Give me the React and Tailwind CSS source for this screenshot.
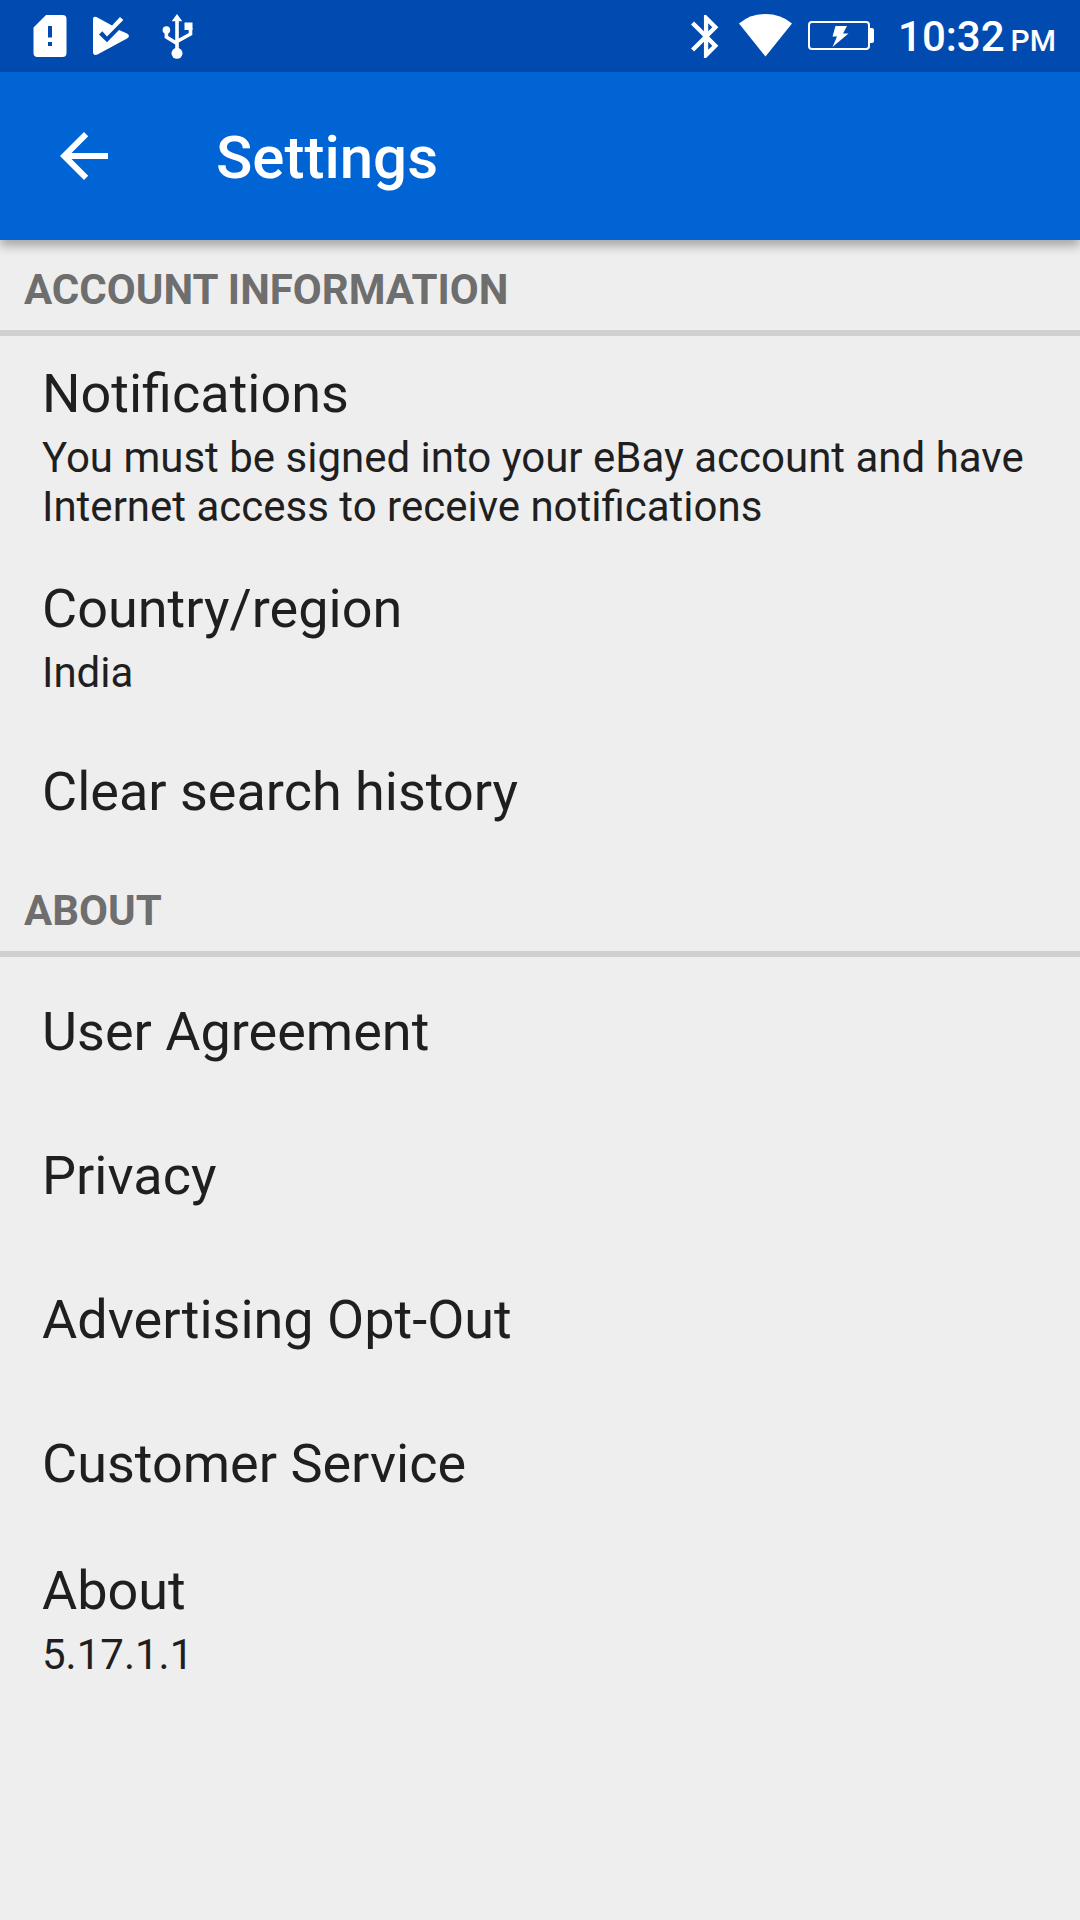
function SimAlertIcon() {
  return (
    <svg viewBox="33 14 34 44" className="h-11 w-[34px]" aria-hidden="true">
      <path
        fill="currentColor"
        fillRule="evenodd"
        d="M46 15H62.500Q66.500 15 66.500 19V53Q66.500 57 62.500 57H37.500Q33.500 57 33.500 53V27.500ZM48 26V37.500H52V26ZM48 42V46H52V42Z"
      />
    </svg>
  );
}

function PlayCheckIcon() {
  return (
    <svg viewBox="92 15 38 42" className="h-[42px] w-[38px]" aria-hidden="true">
      <path
        fill="currentColor"
        d="M93 19Q93 16 96.500 17L112 25.500L120 17L123.300 20L107 36.500L102.300 31.300L99 34.500L107 42.300L119 30L127 33.500Q131 36 127 38.500L97.500 54.500Q93 56 93 52Z"
      />
    </svg>
  );
}

function UsbIcon() {
  return (
    <svg viewBox="162 13 32 46" className="h-[46px] w-8" aria-hidden="true">
      <path
        fill="none"
        stroke="currentColor"
        strokeWidth="3.6"
        d="M177 20V52M166.400 31V37L177 43.500M190.500 28V34L177 41.500"
      />
      <path fill="currentColor" d="M177 14L182.300 21.300H171.700ZM184.500 22.500H192.500V30H184.500Z" />
      <circle cx="177" cy="53.300" r="5.500" fill="currentColor" />
      <circle cx="166.400" cy="30" r="3.800" fill="currentColor" />
    </svg>
  );
}

function BluetoothIcon() {
  return (
    <svg viewBox="5 2 13 20" className="h-[43px] w-7" aria-hidden="true">
      <path
        fill="currentColor"
        d="M17.710 7.710L12 2h-1v7.590L6.410 5 5 6.410 10.590 12 5 17.590 6.410 19 11 14.410V22h1l5.710-5.710-4.300-4.290 4.300-4.290zM13 5.830l1.880 1.880L13 9.590V5.830zm1.880 10.460L13 18.170v-3.760l1.880 1.880z"
      />
    </svg>
  );
}

function WifiIcon() {
  return (
    <svg viewBox="739 14 53 44" className="h-11 w-[53px]" aria-hidden="true">
      <path fill="currentColor" d="M739 23.500Q750 14 765.500 14Q781 14 792 23.500L765.500 56.500Z" />
    </svg>
  );
}

function BatteryIcon() {
  return (
    <svg viewBox="808 20 66 32" className="h-8 w-[66px]" aria-hidden="true">
      <rect x="809" y="22" width="60" height="27" rx="3" fill="none" stroke="currentColor" strokeWidth="2" />
      <path fill="currentColor" d="M869 28H872Q874 28 874 30V41Q874 43 872 43H869Z" />
      <path fill="currentColor" d="M835.500 26H847L843 33.500H848.500L832.500 47L837 36.500H832.500Z" />
    </svg>
  );
}

function StatusBar() {
  return (
    <div className="flex h-[72px] items-center justify-between bg-[#004ab0] pr-6 pl-[33px] text-white">
      <div className="flex items-center">
        <SimAlertIcon />
        <div className="ml-[25px]">
          <PlayCheckIcon />
        </div>
        <div className="ml-8">
          <UsbIcon />
        </div>
      </div>
      <div className="flex items-center">
        <BluetoothIcon />
        <div className="ml-5">
          <WifiIcon />
        </div>
        <div className="ml-4">
          <BatteryIcon />
        </div>
        <p className="ml-6 pt-1.5 text-[42px] leading-[50px] font-medium whitespace-nowrap">
          10:32<span className="ml-1.5 text-[30px]">PM</span>
        </p>
      </div>
    </div>
  );
}

function AppBar() {
  return (
    <header className="relative flex h-[168px] items-center bg-[#0064d4] pl-12 text-white shadow-[0_6px_10px_rgba(0,0,0,0.3)]">
      <button type="button" aria-label="Back" className="flex size-[72px] items-center justify-center">
        <svg viewBox="4 4 16 16" className="size-12" aria-hidden="true">
          <path fill="currentColor" d="M20 11H7.830l5.590-5.590L12 4l-8 8 8 8 1.410-1.410L7.830 13H20v-2z" />
        </svg>
      </button>
      <h1 className="ml-24 pt-1 text-[60px] leading-[72px] font-medium">Settings</h1>
    </header>
  );
}

function Row({ title, summary }) {
  return (
    <li>
      {summary ? (
        <button type="button" className="block w-full px-[42px] pt-6 pb-5 text-left">
          <span className="block text-[54px] leading-[68px]">{title}</span>
          <span className="mt-[5px] block text-[42px] leading-[49px]">{summary}</span>
        </button>
      ) : (
        <button type="button" className="block w-full px-[42px] pt-[41px] pb-[35px] text-left">
          <span className="block text-[54px] leading-[68px]">{title}</span>
        </button>
      )}
    </li>
  );
}

function Section({ heading, rows }) {
  return (
    <section>
      <h2 className="border-b-[6px] border-[#d0d0d0] px-6 pt-[25px] pb-[15px] text-[42px] leading-[50px] font-bold text-[#6e6e6e]">
        {heading}
      </h2>
      <ul>
        {rows.map((row) => (
          <Row key={row.title} {...row} />
        ))}
      </ul>
    </section>
  );
}

const accountRows = [
  {
    title: "Notifications",
    summary: "You must be signed into your eBay account and have Internet access to receive notifications",
  },
  { title: "Country/region", summary: "India" },
  { title: "Clear search history" },
];

const aboutRows = [
  { title: "User Agreement" },
  { title: "Privacy" },
  { title: "Advertising Opt-Out" },
  { title: "Customer Service" },
  { title: "About", summary: "5.17.1.1" },
];

export default function App() {
  return (
    <div className="min-h-screen bg-[#eeeeee] font-['Roboto',sans-serif] text-[#1f1f1f]">
      <StatusBar />
      <AppBar />
      <main>
        <Section heading="ACCOUNT INFORMATION" rows={accountRows} />
        <Section heading="ABOUT" rows={aboutRows} />
      </main>
    </div>
  );
}
